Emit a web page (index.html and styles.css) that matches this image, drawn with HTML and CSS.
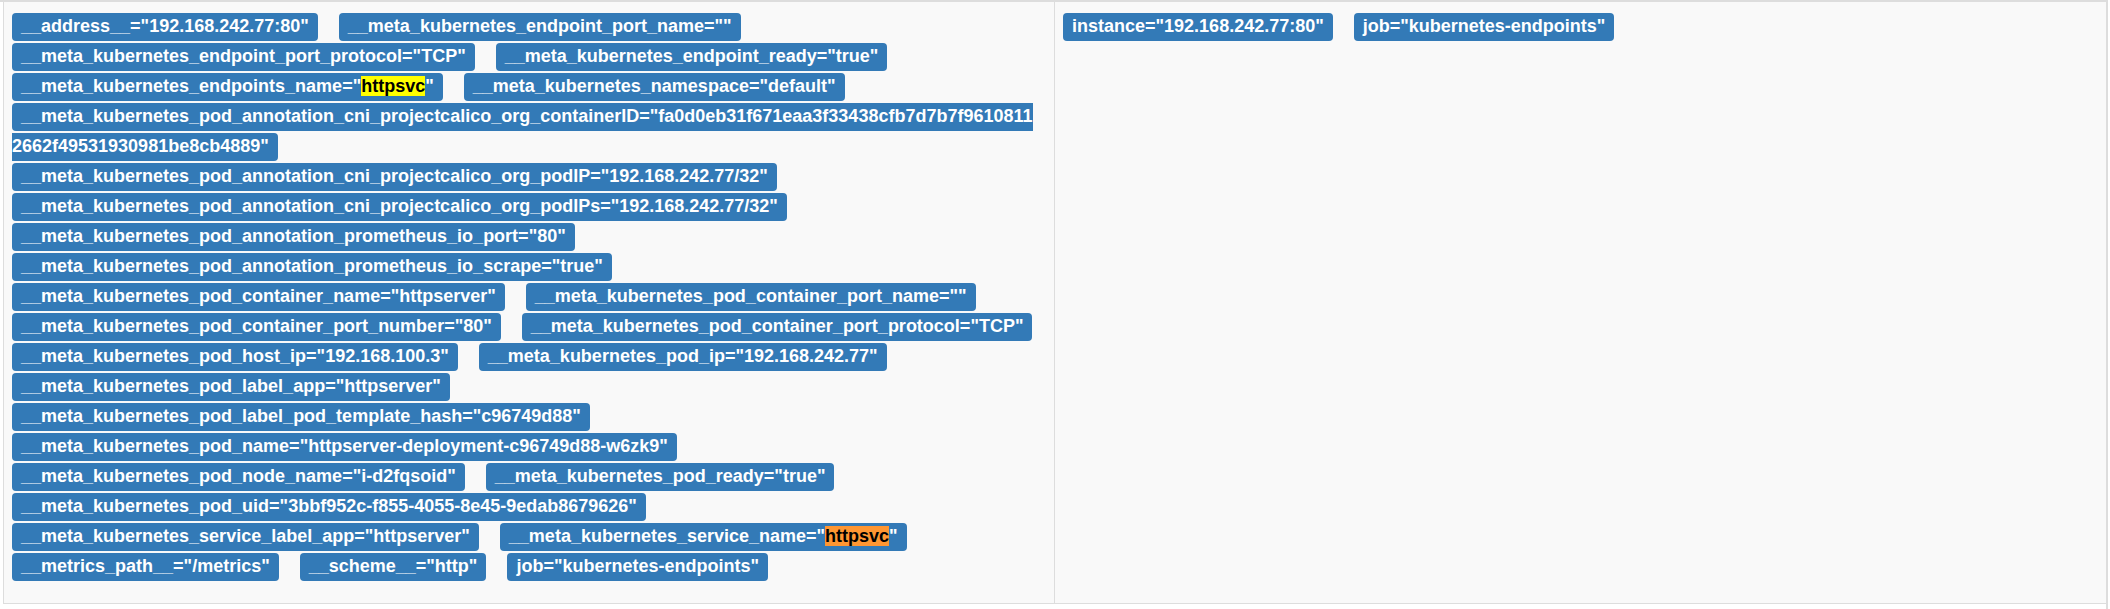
FILE: index.html
```html
<!DOCTYPE html>
<html>
<head>
<meta charset="utf-8">
<link rel="stylesheet" href="styles.css">
</head>
<body>
<div class="panel">
  <div class="row">
    <div class="cell cell-discovered">
      <span class="lbl">__address__="192.168.242.77:80"</span>
      <span class="lbl">__meta_kubernetes_endpoint_port_name=""</span>
      <span class="lbl">__meta_kubernetes_endpoint_port_protocol="TCP"</span>
      <span class="lbl">__meta_kubernetes_endpoint_ready="true"</span>
      <span class="lbl">__meta_kubernetes_endpoints_name="<span class="hl">httpsvc</span>"</span>
      <span class="lbl">__meta_kubernetes_namespace="default"</span>
      <span class="lbl lbl-wrap">__meta_kubernetes_pod_annotation_cni_projectcalico_org_containerID="fa0d0eb31f671eaa3f33438cfb7d7b7f96108112662f49531930981be8cb4889"</span>
      <span class="lbl">__meta_kubernetes_pod_annotation_cni_projectcalico_org_podIP="192.168.242.77/32"</span>
      <span class="lbl">__meta_kubernetes_pod_annotation_cni_projectcalico_org_podIPs="192.168.242.77/32"</span>
      <span class="lbl">__meta_kubernetes_pod_annotation_prometheus_io_port="80"</span>
      <span class="lbl">__meta_kubernetes_pod_annotation_prometheus_io_scrape="true"</span>
      <span class="lbl">__meta_kubernetes_pod_container_name="httpserver"</span>
      <span class="lbl">__meta_kubernetes_pod_container_port_name=""</span>
      <span class="lbl">__meta_kubernetes_pod_container_port_number="80"</span>
      <span class="lbl">__meta_kubernetes_pod_container_port_protocol="TCP"</span>
      <span class="lbl">__meta_kubernetes_pod_host_ip="192.168.100.3"</span>
      <span class="lbl">__meta_kubernetes_pod_ip="192.168.242.77"</span>
      <span class="lbl">__meta_kubernetes_pod_label_app="httpserver"</span>
      <span class="lbl">__meta_kubernetes_pod_label_pod_template_hash="c96749d88"</span>
      <span class="lbl">__meta_kubernetes_pod_name="httpserver-deployment-c96749d88-w6zk9"</span>
      <span class="lbl">__meta_kubernetes_pod_node_name="i-d2fqsoid"</span>
      <span class="lbl">__meta_kubernetes_pod_ready="true"</span>
      <span class="lbl">__meta_kubernetes_pod_uid="3bbf952c-f855-4055-8e45-9edab8679626"</span>
      <span class="lbl">__meta_kubernetes_service_label_app="httpserver"</span>
      <span class="lbl">__meta_kubernetes_service_name="<span class="hl hl-active">httpsvc</span>"</span>
      <span class="lbl">__metrics_path__="/metrics"</span>
      <span class="lbl">__scheme__="http"</span>
      <span class="lbl">job="kubernetes-endpoints"</span>
    </div>
    <div class="cell">
      <span class="lbl">instance="192.168.242.77:80"</span>
      <span class="lbl">job="kubernetes-endpoints"</span>
    </div>
  </div>
</div>
</body>
</html>
```
FILE: styles.css
```css
html, body {
  margin: 0;
  padding: 0;
  background: #ffffff;
}

.panel {
  width: 2108px;
  height: 609px;
  box-sizing: border-box;
  border-top: 2px solid #dddddd;
  border-right: 2px solid #dddddd;
  padding-left: 3px;
  overflow: hidden;
}

.row {
  display: grid;
  grid-template-columns: 1051px 1052px;
  border-bottom: 1px solid #dddddd;
  background: #f9f9f9;
}

.cell {
  border-left: 1px solid #dddddd;
  padding: 9px 8px 22px 8px;
  height: 570px;
  font-family: "Liberation Sans", Arial, sans-serif;
  font-size: 18px;
  font-weight: bold;
  line-height: 30px;
  word-spacing: 16px;
  color: #333333;
}

.cell-discovered {
  padding-right: 14px;
}

.lbl {
  background: #337ab7;
  color: #ffffff;
  padding: 3px 9px 5px 9px;
  border-radius: 4px;
  word-spacing: normal;
  white-space: nowrap;
}

.lbl-wrap {
  white-space: normal;
  overflow-wrap: anywhere;
}

.hl {
  background: #ffff00;
  color: #000000;
}

.hl-active {
  background: #ff9632;
}
```
